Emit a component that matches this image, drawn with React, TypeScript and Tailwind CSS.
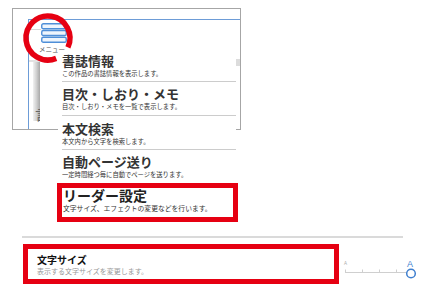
import React from "react";

const MENU_ITEMS = [
  { title: "書誌情報", desc: "この作品の書誌情報を表示します。", h: "h-[30px]", pt: "pt-[1px]" },
  { title: "目次・しおり・メモ", desc: "目次・しおり・メモを一覧で表示します。", h: "h-[34px]", pt: "pt-[4px]" },
  { title: "本文検索", desc: "本文内から文字を検索します。", h: "h-[34px]", pt: "pt-[5px]" },
];

function MenuIcon() {
  return (
    <svg width="26" height="20" viewBox="0 0 26 20">
      {[0.75, 7.5, 14.25].map((y) => (
        <rect key={y} x="0.75" y={y} width="24.5" height="5" rx="1.6" fill="#eef5fd" stroke="#4f8fd8" strokeWidth="1.4" />
      ))}
    </svg>
  );
}

function SizeSlider() {
  return (
    <svg width="80" height="24" viewBox="0 0 80 24">
      <text x="1" y="10" fontSize="4.5" fill="#aaa" fontFamily="Liberation Sans, sans-serif">A</text>
      <line x1="2" y1="17.5" x2="64" y2="17.5" stroke="#cfcfcf" strokeWidth="1" />
      {[2, 19, 36, 53].map((x) => (
        <line key={x} x1={x + 0.5} y1="14.5" x2={x + 0.5} y2="17.5" stroke="#cfcfcf" strokeWidth="1" />
      ))}
      <text x="64" y="12" fontSize="9" fill="#3f7fcf" fontFamily="Liberation Sans, sans-serif">A</text>
      <circle cx="68" cy="18.5" r="4.3" fill="#fff" stroke="#3f7fcf" strokeWidth="1.5" />
    </svg>
  );
}

export default function App() {
  return (
    <div
      className="relative w-[425px] h-[304px] bg-white overflow-hidden text-[#333]"
      style={{ fontFamily: '"Noto Sans CJK JP", "Noto Sans", sans-serif' }}
    >
      {/* Screenshot of the reader */}
      <div className="relative h-[236px] pt-[8px] pl-[12px]">
        <div className="w-[229px] h-[122px] border border-[#a6a6a6] pt-[10px] pl-[15px]">
          <div className="relative h-full border-l border-t border-[#6d9cd7]">
            <div className="absolute left-0 top-[9px] w-[12px] h-px bg-[#d9d9d9]" />
            <div className="absolute left-0 top-[40px] w-[12px] h-[2px] bg-[#e2e2e2]" />
            <div className="absolute left-[4px] top-[42px] w-[7px] h-[59px] bg-gradient-to-r from-[#f2f2f2] via-[#d0d0d0] to-[#a8a8a8]" />
            <div className="absolute left-[6px] top-[86px] w-[5px] overflow-hidden text-[14px] leading-[16px] text-[#666]">言</div>
            <div className="absolute left-[207px] top-[39px] w-[4px] h-[7px] bg-[#dcdcdc]" />
            <div className="flex flex-col items-start pl-[12px] pt-[3px]">
              <MenuIcon />
              <span className="mt-[2px] -ml-[2px] text-[6.5px] leading-[8px] text-[#555]">メニュー</span>
            </div>
          </div>
        </div>

        {/* Dropdown menu */}
        <div className="absolute left-[58px] top-[52px] w-[178px] bg-white">
          {MENU_ITEMS.map((it) => (
            <div key={it.title} className={`${it.h} ${it.pt} ml-[4px] border-b border-[#cccccc]`}>
              <p className="text-[13px] leading-[16px] font-bold text-[#333]">{it.title}</p>
              <p className="mt-[1px] text-[6.3px] leading-[8px] text-[#333]">{it.desc}</p>
            </div>
          ))}
          <div className="h-[33px] pt-[4px] ml-[4px]">
            <p className="text-[13px] leading-[16px] font-bold text-[#333]">自動ページ送り</p>
            <p className="mt-[1px] text-[6.3px] leading-[8px] text-[#333]">一定時間経つ毎に自動でページを送ります。</p>
          </div>
          <div className="-ml-[1px] w-[181px] h-[39px] border-[5px] border-[#e60012] pl-[1px]">
            <p className="-mt-[1px] text-[14px] leading-[17px] font-bold text-[#222]">リーダー設定</p>
            <p className="text-[6.8px] leading-[9px] text-[#333]">文字サイズ、エフェクトの変更などを行います。</p>
          </div>
        </div>

        {/* Red ring annotation */}
        <svg className="absolute left-0 top-0 pointer-events-none" width="90" height="75" viewBox="0 0 90 75">
          <path d="M 56.2 58.4 A 22 22 0 1 1 67.9 47.3" fill="none" stroke="#e60012" strokeWidth="5.5" />
        </svg>
      </div>

      {/* Settings row */}
      <div className="mx-[22px] h-[2px] bg-[#dadada]" />
      <div className="flex items-start mt-[6px] ml-[23px]">
        <div className="w-[316px] h-[40px] border-[5px] border-[#e60012] pl-[9px] pt-[4px]">
          <p className="text-[10px] leading-[13px] font-bold text-[#111]">文字サイズ</p>
          <p className="mt-[1px] text-[7px] leading-[9px] text-[#999]">表示する文字サイズを変更します。</p>
        </div>
        <div className="ml-[4px] mt-[11px]">
          <SizeSlider />
        </div>
      </div>
    </div>
  );
}
